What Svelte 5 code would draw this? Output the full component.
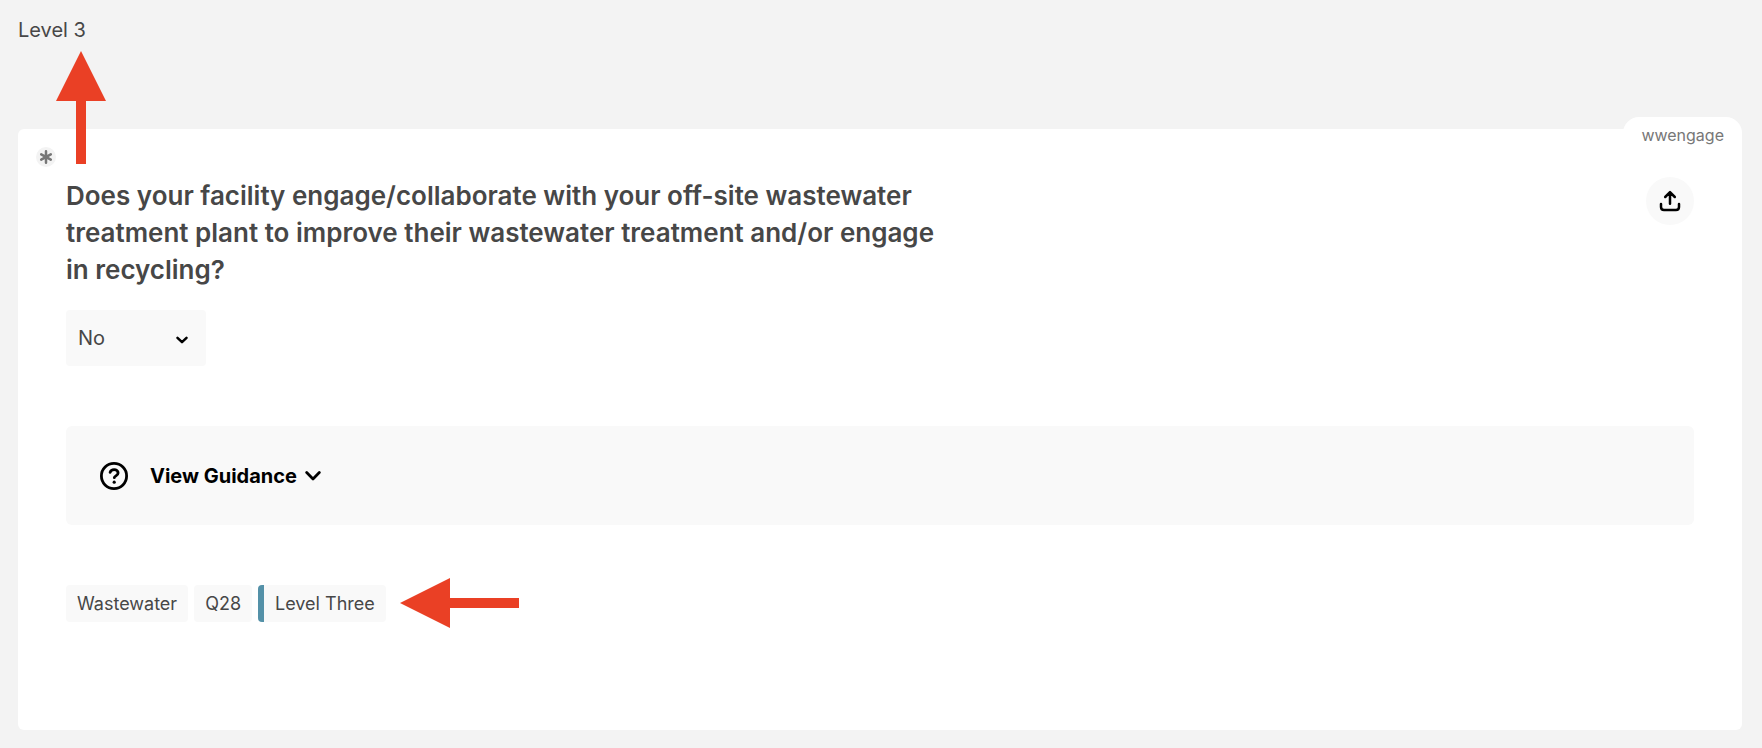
<script>
  let answer = $state('No');
  const tags = [
    { label: 'Wastewater' },
    { label: 'Q28' },
    { label: 'Level Three', level: true }
  ];
</script>

<main>
  <p class="level">Level 3</p>

  <section class="card">
    <span class="code">wwengage</span>

    <span class="required">
      <svg width="20" height="20" viewBox="0 0 20 20" aria-hidden="true">
        <path d="M10 4.300v11.400M5.200 7.300l9.600 5.400M14.800 7.300l-9.600 5.400" stroke="#777" stroke-width="2.500" stroke-linecap="round" />
      </svg>
    </span>

    <div class="top">
      <h1 id="question">
        Does your facility engage/collaborate with your off-site wastewater treatment plant to improve their wastewater
        treatment and/or engage in recycling?
      </h1>
      <button class="upload" type="button" aria-label="Upload">
        <svg width="24" height="24" viewBox="0 0 24 24" fill="none" stroke="#000" stroke-width="2.500" stroke-linecap="round" stroke-linejoin="round" aria-hidden="true">
          <path d="M12 14.800V3.400M7.200 8L12 3.200l4.800 4.800M3 15v3q0 3 3 3h12q3 0 3-3v-3" />
        </svg>
      </button>
    </div>

    <div class="answer">
      <select aria-labelledby="question" bind:value={answer}>
        <option>No</option>
        <option>Yes</option>
      </select>
      <svg width="12" height="8" viewBox="0 0 12 8" fill="none" stroke="#000" stroke-width="2.500" stroke-linecap="round" stroke-linejoin="round" aria-hidden="true">
        <path d="M1.500 1.800L6 6.200l4.500-4.400" />
      </svg>
    </div>

    <button class="guidance" type="button">
      <svg width="28" height="28" viewBox="0 0 28 28" fill="none" stroke="#000" stroke-width="2.800" stroke-linecap="round" stroke-linejoin="round" aria-hidden="true">
        <circle cx="14" cy="14" r="12.600" />
        <path d="M10.100 10.400c.6-1.900 2.100-2.700 4-2.700 2.300 0 4 1.400 4 3.300 0 2.700-3.800 2.900-3.800 4.700" />
        <circle cx="14.200" cy="20.200" r="1.600" fill="#000" stroke="none" />
      </svg>
      <span class="view">
        View Guidance
        <svg width="16" height="10" viewBox="0 0 16 10" fill="none" stroke="#000" stroke-width="2.800" stroke-linecap="round" stroke-linejoin="round" aria-hidden="true">
          <path d="M1.700 1.600L8 7.900l6.300-6.300" />
        </svg>
      </span>
    </button>

    <div class="tags">
      {#each tags as tag}
        <span class="tag" class:lead={tag.level}>{tag.label}</span>
      {/each}
    </div>
  </section>

  <svg class="arrow up" width="50" height="113" viewBox="0 0 50 113" fill="#ea4025" aria-hidden="true">
    <path d="M25 0l25 50H30v63H20V50H0z" />
  </svg>
  <svg class="arrow left" width="119" height="50" viewBox="0 0 119 50" fill="#ea4025" aria-hidden="true">
    <path d="M0 25L50 0v20h69v10H50v20z" />
  </svg>
</main>

<style>
  :global(body) {
    background: #f3f3f3;
  }

  main {
    position: relative;
    padding: 18px 20px 18px 18px;
    font-family: Inter, 'Noto Sans', sans-serif;
    color: #474747;
  }

  .level {
    margin: 0 0 87px;
    font-size: 20px;
    line-height: 24px;
  }

  .card {
    position: relative;
    padding: 48px 48px 108px;
    border-radius: 6px;
    background: #fff;
  }

  .code {
    position: absolute;
    top: -12px;
    right: 0;
    padding: 8px 18px;
    border-radius: 16px 16px 0 0;
    background: #fff;
    font-size: 16px;
    line-height: 20px;
    color: #777;
  }

  .required {
    position: absolute;
    top: 18px;
    left: 18px;
    display: flex;
    border-radius: 50%;
    background: #f3f3f3;
  }

  .top {
    display: flex;
    align-items: flex-start;
    justify-content: space-between;
    gap: 48px;
  }

  h1 {
    max-width: 880px;
    margin: 0;
    font-size: 26px;
    font-weight: 600;
    line-height: 37px;
  }

  button {
    border: 0;
    font-family: inherit;
    cursor: pointer;
  }

  .upload {
    display: flex;
    flex: none;
    align-items: center;
    justify-content: center;
    width: 48px;
    height: 48px;
    padding: 0;
    border-radius: 50%;
    background: #f9f9f9;
  }

  .answer {
    position: relative;
    width: 140px;
    margin: 22px 0 60px;
  }

  .answer svg {
    position: absolute;
    top: 26px;
    right: 18px;
    pointer-events: none;
  }

  select {
    display: block;
    width: 100%;
    height: 56px;
    padding: 0 36px 0 12px;
    border: 0;
    border-radius: 4px;
    background: #f9f9f9;
    appearance: none;
    font-family: inherit;
    font-size: 20px;
    color: inherit;
  }

  .guidance {
    display: flex;
    align-items: center;
    gap: 22px;
    width: 100%;
    height: 99px;
    margin-bottom: 60px;
    padding: 0 34px;
    border-radius: 6px;
    background: #f9f9f9;
    font-size: 20px;
    font-weight: 700;
    line-height: 24px;
    color: #000;
  }

  .view {
    display: flex;
    align-items: center;
    gap: 8px;
  }

  .tags {
    display: flex;
    flex-wrap: wrap;
    gap: 6px;
  }

  .tag {
    padding: 8px 11px;
    border-radius: 4px;
    background: #f9f9f9;
    font-size: 18px;
    line-height: 21px;
  }

  .lead {
    border-left: 6px solid #5491a8;
  }

  .arrow {
    position: absolute;
  }

  .up {
    top: 51px;
    left: 56px;
  }

  .left {
    top: 578px;
    left: 400px;
  }
</style>
